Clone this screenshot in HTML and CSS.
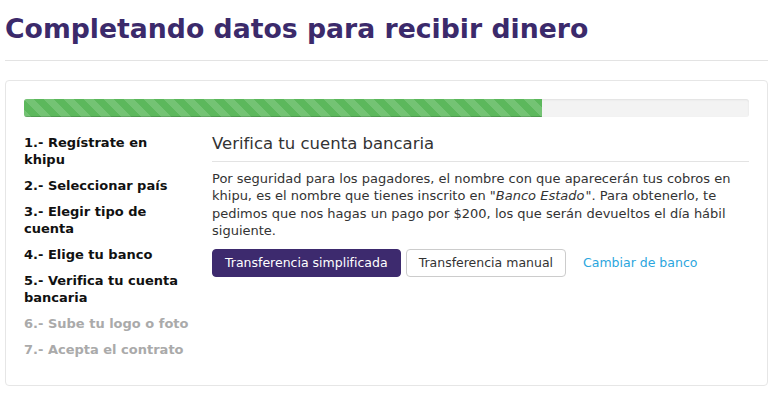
FILE: index.html
```html
<!DOCTYPE html>
<html lang="es">
<head>
<meta charset="utf-8">
<title>Completando datos para recibir dinero</title>
<link rel="stylesheet" href="styles.css">
</head>
<body>
<div class="page">
  <h1 class="page-title">Completando datos para recibir dinero</h1>
  <hr class="rule">
  <div class="panel">
    <div class="progress">
      <div class="progress-fill" style="width: 71.43%"></div>
    </div>
    <div class="columns">
      <ol class="steps">
        <li class="step done">1.- Regístrate en khipu</li>
        <li class="step done">2.- Seleccionar país</li>
        <li class="step done">3.- Elegir tipo de cuenta</li>
        <li class="step done">4.- Elige tu banco</li>
        <li class="step done">5.- Verifica tu cuenta bancaria</li>
        <li class="step todo">6.- Sube tu logo o foto</li>
        <li class="step todo">7.- Acepta el contrato</li>
      </ol>
      <div class="content">
        <h2 class="section-title">Verifica tu cuenta bancaria</h2>
        <p class="text">Por seguridad para los pagadores, el nombre con que aparecerán tus cobros en khipu, es el nombre que tienes inscrito en "<em class="bank">Banco Estado</em>". Para obtenerlo, te pedimos que nos hagas un pago por $200, los que serán devueltos el día hábil siguiente.</p>
        <div class="actions">
          <a class="btn btn-primary" href="#">Transferencia simplificada</a>
          <a class="btn btn-default" href="#">Transferencia manual</a>
          <a class="link" href="#">Cambiar de banco</a>
        </div>
      </div>
    </div>
  </div>
</div>
</body>
</html>
```
FILE: styles.css
```css
* { box-sizing: border-box; }
html, body { margin: 0; padding: 0; background: #fff; }
body {
  font-family: "DejaVu Sans", Verdana, sans-serif;
  font-size: 13px;
  color: #333;
}
.page {
  padding: 0 10px 0 5px;
}
.page-title {
  margin: 13px 0 0;
  font-size: 26.7px;
  line-height: 32px;
  font-weight: bold;
  color: #3b2a6b;
}
.rule {
  margin: 15px 0 0;
  border: 0;
  border-top: 1px solid #e3e3e3;
  height: 0;
}
.panel {
  margin-top: 19px;
  border: 1px solid #e6e6e6;
  border-radius: 4px;
  padding: 18px;
}
.progress {
  height: 18px;
  background: #f3f3f3;
  border-radius: 3px;
  box-shadow: inset 0 1px 2px rgba(0,0,0,0.08);
  overflow: hidden;
}
.progress-fill {
  height: 100%;
  background-color: #5cb85c;
  background-image: linear-gradient(45deg, rgba(255,255,255,.15) 25%, transparent 25%, transparent 50%, rgba(255,255,255,.15) 50%, rgba(255,255,255,.15) 75%, transparent 75%, transparent);
  background-size: 20px 20px;
  box-shadow: inset 0 -1px 0 rgba(0,0,0,.15);
}
.columns {
  display: grid;
  grid-template-columns: 168px 1fr;
  column-gap: 20px;
  margin-top: 17px;
}
.steps {
  list-style: none;
  margin: 0;
  padding: 0 0 9px;
  display: flex;
  flex-direction: column;
  gap: 9px;
}
.step {
  font-weight: bold;
  line-height: 17px;
}
.step.done { color: #111; }
.step.todo { color: #aaa; }
.section-title {
  margin: 0;
  font-size: 16.5px;
  line-height: 20px;
  font-weight: normal;
  color: #333;
  padding-bottom: 7px;
  border-bottom: 1px solid #e3e3e3;
}
.text {
  margin: 8px 0 0;
  line-height: 17.4px;
}
.bank {
  font-style: italic;
  padding-right: 1px;
}
.actions {
  margin-top: 9px;
  display: flex;
  align-items: center;
}
.btn {
  display: inline-block;
  height: 28px;
  line-height: 26px;
  padding: 0 12px;
  border-radius: 4px;
  border: 1px solid transparent;
  text-decoration: none;
  font-size: 12.5px;
}
.btn-primary {
  background: #3d2a6e;
  border-color: #3d2a6e;
  color: #fff;
}
.btn-default {
  margin-left: 5px;
  background: #fff;
  border-color: #ccc;
  color: #333;
}
.link {
  margin-left: 17px;
  font-size: 12.5px;
  color: #2ba6de;
  text-decoration: none;
}
```
